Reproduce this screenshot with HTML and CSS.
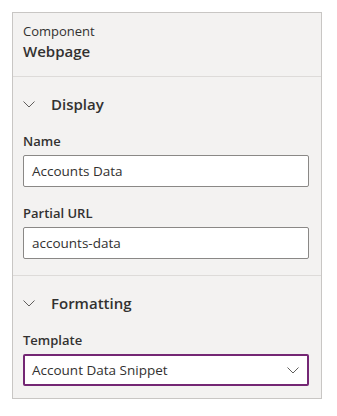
FILE: index.html
```html
<!DOCTYPE html>
<html>
<head>
<meta charset="utf-8">
<link rel="stylesheet" href="styles.css">
</head>
<body>
<div class="panel">
  <div class="header">
    <div class="kind">Component</div>
    <div class="title">Webpage</div>
  </div>
  <div class="section">
    <div class="sec-head">
      <svg class="chev" width="12" height="7" viewBox="0 0 12 7"><path d="M0.5 0.5 L6 6 L11.5 0.5" fill="none" stroke="#605e5c" stroke-width="1"/></svg>
      <span class="sec-title">Display</span>
    </div>
    <div class="field">
      <div class="label">Name</div>
      <div class="input">Accounts Data</div>
    </div>
    <div class="field">
      <div class="label">Partial URL</div>
      <div class="input">accounts-data</div>
    </div>
  </div>
  <div class="section last">
    <div class="sec-head">
      <svg class="chev" width="12" height="7" viewBox="0 0 12 7"><path d="M0.5 0.5 L6 6 L11.5 0.5" fill="none" stroke="#605e5c" stroke-width="1"/></svg>
      <span class="sec-title">Formatting</span>
    </div>
    <div class="field">
      <div class="label">Template</div>
      <div class="select"><span>Account Data Snippet</span>
        <svg class="chev-s" width="12" height="7" viewBox="0 0 12 7"><path d="M0.5 0.5 L6 6 L11.5 0.5" fill="none" stroke="#605e5c" stroke-width="1"/></svg>
      </div>
    </div>
  </div>
</div>
</body>
</html>
```
FILE: styles.css
```css
html, body { margin: 0; padding: 0; background: #ffffff; }
body { font-family: "Open Sans", "Noto Sans", sans-serif; color: #323130; }
.panel {
  margin: 12px 0 0 12px;
  width: 308px;
  height: 385px;
  background: #f3f2f1;
  border: 1px solid #c8c6c4;
}
.header {
  padding: 9px 10px 0 10px;
  height: 54px;
  border-bottom: 1px solid #dddbd9;
}
.kind { font-size: 13px; line-height: 18px; color: #323130; }
.title { font-size: 15px; line-height: 20px; font-weight: 600; margin-top: 1px; }
.section { padding: 0 12px 16px 10px; border-bottom: 1px solid #dddbd9; }
.section.last { border-bottom: none; }
.sec-head { display: flex; align-items: center; height: 54px; }
.chev { margin-right: 16px; flex: none; }
.sec-title { font-size: 15px; font-weight: 600; }
.field { margin-bottom: 16px; }
.field:last-child { margin-bottom: 0; }
.label { font-size: 13px; font-weight: 600; line-height: 20px; padding-bottom: 4px; }
.input {
  box-sizing: border-box;
  height: 32px;
  border: 1px solid #8a8886;
  border-radius: 2px;
  background: #fff;
  padding: 0 8px;
  font-size: 13.5px;
  line-height: 30px;
}
.select {
  box-sizing: border-box;
  height: 32px;
  border: 2px solid #742774;
  border-radius: 2px;
  background: #fff;
  padding: 0 8px 0 7px;
  font-size: 13.5px;
  line-height: 28px;
  display: flex;
  justify-content: space-between;
  align-items: center;
}
```
